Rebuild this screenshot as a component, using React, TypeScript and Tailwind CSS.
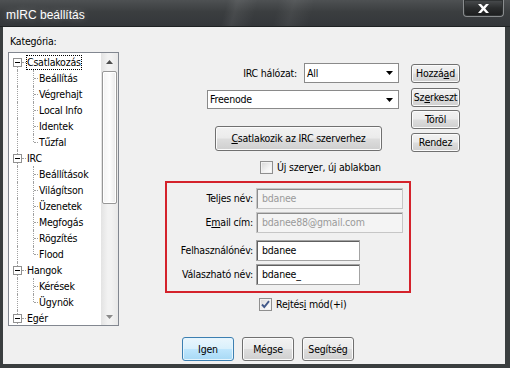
import React from "react";

const font = "font-['DejaVu_Sans_Condensed','Liberation_Sans',sans-serif]";

const btn =
  "flex items-center justify-center rounded-[3px] border border-[#707070] bg-[linear-gradient(to_bottom,#f2f2f2_0%,#ebebeb_48%,#dddddd_52%,#cfcfcf_100%)] shadow-[inset_0_0_0_1px_#fbfbfb] text-black";
const defaultBtn =
  "flex items-center justify-center rounded-[3px] border border-[#3c7fb1] bg-[linear-gradient(to_bottom,#eaf6fd_0%,#d9f0fc_48%,#bee6fd_52%,#a7d9f5_100%)] shadow-[inset_0_0_0_1px_#e6f5fd] text-black";

type Node = { label: string; children?: string[] };

const tree: Node[] = [
  { label: "Csatlakozás", children: ["Beállítás", "Végrehajt", "Local Info", "Identek", "Tűzfal"] },
  { label: "IRC", children: ["Beállítások", "Világítson", "Üzenetek", "Megfogás", "Rögzítés", "Flood"] },
  { label: "Hangok", children: ["Kérések", "Ügynök"] },
  { label: "Egér" },
];

const dot = "border-dotted border-[#a0a0a0]";

function ParentRow({ label, first, selected }: { label: string; first?: boolean; selected?: boolean }) {
  return (
    <div className="relative h-[16px] flex items-center">
      <span className={`absolute left-[8px] ${first ? "top-[8px]" : "top-0"} bottom-0 border-l ${dot}`} />
      <span className={`absolute left-[13px] top-[8px] w-[4px] border-t ${dot}`} />
      <span className="absolute left-[4px] top-[4px] w-[9px] h-[9px] border border-[#919191] bg-white flex items-center justify-center">
        <span className="w-[5px] h-px bg-black" />
      </span>
      <span
        className={`ml-[17px] h-[15px] flex items-center border border-dotted ${
          selected ? "border-black" : "border-transparent"
        }`}
      >
        {label}
      </span>
    </div>
  );
}

function ChildRow({ label, last }: { label: string; last?: boolean }) {
  return (
    <div className="relative h-[16px] flex items-center">
      <span className={`absolute left-[8px] top-0 bottom-0 border-l ${dot}`} />
      <span className={`absolute left-[24px] top-0 ${last ? "h-[8px]" : "bottom-0"} border-l ${dot}`} />
      <span className={`absolute left-[25px] top-[8px] w-[4px] border-t ${dot}`} />
      <span className="ml-[29px] h-[15px] flex items-center border border-transparent">{label}</span>
    </div>
  );
}

function Scrollbar() {
  return (
    <div className="w-[17px] flex flex-col bg-[linear-gradient(to_right,#e3e3e3,#f2f2f2_40%,#f2f2f2_60%,#e8e8e8)]">
      <div className="h-[17px] flex items-center justify-center">
        <svg width="7" height="4" viewBox="0 0 7 4">
          <path d="M3.5 0L7 4H0z" fill="#4d4d4d" />
        </svg>
      </div>
      <div className="mt-[1px] mx-[1px] h-[133px] rounded-[2px] border border-[#979797] bg-[linear-gradient(to_right,#f3f3f3,#fdfdfd_50%,#e9e9e9)] shadow-[inset_0_0_0_1px_#ffffff]" />
      <div className="flex-1" />
      <div className="h-[17px] flex items-center justify-center">
        <svg width="7" height="4" viewBox="0 0 7 4">
          <path d="M0 0H7L3.5 4z" fill="#8a8a8a" />
        </svg>
      </div>
    </div>
  );
}

function Combo({ value, className }: { value: string; className: string }) {
  return (
    <div className={`flex items-center bg-white border border-[#8a8a8a] ${className}`}>
      <span className="flex-1 pl-[2px]">{value}</span>
      <svg width="7" height="4" viewBox="0 0 7 4" className="mr-[5px]">
        <path d="M0 0H7L3.5 4z" fill="#000" />
      </svg>
    </div>
  );
}

function Check({ checked }: { checked?: boolean }) {
  return (
    <span className="w-[13px] h-[13px] border border-[#8f8f8f] bg-[linear-gradient(135deg,#d6d6d6,#f4f4f4_60%,#ffffff)] shadow-[inset_0_0_0_1px_#f2f2f2] flex items-center justify-center">
      {checked && (
        <svg width="11" height="11" viewBox="0 0 11 11">
          <path d="M2 5.5L4.3 8L9 2.2" fill="none" stroke="#42598a" strokeWidth="1.9" />
        </svg>
      )}
    </span>
  );
}

function Field({ value, disabled, width }: { value: string; disabled?: boolean; width: string }) {
  return (
    <div
      className={`h-[21px] ${width} flex items-center pl-[5px] border ${
        disabled
          ? "border-[#c6c6c6] bg-[#f4f4f4] text-[#9a9a9a] shadow-[inset_1px_1px_0_#8c8c8c]"
          : "border-[#a3a3a3] bg-white text-black shadow-[inset_1px_1px_0_#5f5f5f]"
      }`}
    >
      {value}
    </div>
  );
}

export default function App() {
  return (
    <div className={`w-[510px] h-[368px] flex flex-col bg-[#3a3e3f] ${font} text-[10.5px] leading-[13px] tracking-[-0.2px] text-black`}>
      {/* Title bar */}
      <div className="h-[27px] flex items-start border-b border-[#1f2223] bg-[linear-gradient(105deg,transparent_44%,rgba(255,255,255,0.07)_46%,transparent_50%,transparent_54%,rgba(255,255,255,0.06)_57%,transparent_61%),linear-gradient(to_bottom,#4e5153,#3b3e40_45%,#34373a)]">
        <span className="pl-[6px] pt-[8px] text-white text-[12px] leading-[14px] tracking-normal font-['Liberation_Sans',sans-serif] [text-shadow:0_0_6px_rgba(255,255,255,0.35)]">
          mIRC beállítás
        </span>
        <div className="ml-auto mr-[6px] w-[41px] h-[17px] rounded-b-[4px] border border-t-0 border-[#8a8d8f] bg-[linear-gradient(to_bottom,#4a4d4f,#2a2c2d_50%,#1c1d1e)] shadow-[inset_0_0_0_1px_#2f3233] flex items-center justify-center">
          <svg width="11" height="9" viewBox="0 0 11 9">
            <path d="M0 0H3L5.5 2.8L8 0H11L7.2 4.5L11 9H8L5.5 6.2L3 9H0L3.8 4.5z" fill="#ffffff" />
          </svg>
        </div>
      </div>

      {/* Client area */}
      <div className="ml-[3px] mr-[5px] h-[337px] bg-[#f0f0f0] flex flex-col">
        <div className="flex h-[299px]">
          {/* Category tree */}
          <div className="pl-[5px] w-[116px] flex flex-col">
            <div className="pl-[2px] pt-[8px]">Kategória:</div>
            <div className="mt-[4px] w-[111px] h-[274px] border border-[#828790] bg-white flex overflow-hidden">
              <div className="flex-1 pt-[1px] overflow-hidden">
                {tree.map((n, i) => (
                  <React.Fragment key={n.label}>
                    <ParentRow label={n.label} first={i === 0} selected={i === 0} />
                    {n.children?.map((c, j) => (
                      <ChildRow key={c} label={c} last={j === n.children!.length - 1} />
                    ))}
                  </React.Fragment>
                ))}
                <div className={`ml-[8px] h-[16px] border-l ${dot}`} />
              </div>
              <Scrollbar />
            </div>
          </div>

          {/* Server / identity */}
          <div className="ml-[46px] w-[246px] flex flex-col">
            <div className="mt-[36px] h-[20px] flex items-center justify-end gap-[7px] pr-[12px]">
              <span>IRC hálózat:</span>
              <Combo value="All" className="w-[95px] h-[20px]" />
            </div>
            <Combo value="Freenode" className="mt-[7px] ml-[42px] w-[192px] h-[19px]" />
            <button className={`${btn} mt-[17px] ml-[50px] w-[167px] h-[25px]`}>
              <span>
                <u>C</u>satlakozik az IRC szerverhez
              </span>
            </button>
            <label className="mt-[10px] ml-[95px] h-[13px] flex items-center gap-[4px]">
              <Check />
              <span>
                Új szer<u>v</u>er, új ablakban
              </span>
            </label>

            <div className="mt-[7px] h-[112px] border-2 border-[#d4222b] flex flex-col">
              {[
                { label: <>Teljes név:</>, value: "bdanee", disabled: true, w: "w-[147px]", mt: "mt-[5px]" },
                { label: <>E<u>m</u>ail cím:</>, value: "bdanee88@gmail.com", disabled: true, w: "w-[147px]", mt: "mt-[3px]" },
                { label: <>Felhasználónév:</>, value: "bdanee", disabled: false, w: "w-[104px]", mt: "mt-[7px]" },
                { label: <>Válaszható név:</>, value: "bdanee_", disabled: false, w: "w-[104px]", mt: "mt-[3px]" },
              ].map((r, i) => (
                <div key={i} className={`${r.mt} flex items-center gap-[3px]`}>
                  <span className="w-[86px] text-right">{r.label}</span>
                  <Field value={r.value} disabled={r.disabled} width={r.w} />
                </div>
              ))}
            </div>

            <label className="mt-[5px] ml-[94px] h-[13px] flex items-center gap-[4px]">
              <Check checked />
              <span>
                Rejtés<u>i</u> mód(+i)
              </span>
            </label>
          </div>

          {/* Network buttons */}
          <div className="w-[49px] flex flex-col">
            <button className={`${btn} mt-[37px] h-[19px]`}>
              <span>
                Hozzá<u>a</u>d
              </span>
            </button>
            <button className={`${btn} mt-[5px] h-[19px]`}>
              <span>
                Sz<u>e</u>rkeszt
              </span>
            </button>
            <button className={`${btn} mt-[3px] h-[19px]`}>Töröl</button>
            <button className={`${btn} mt-[4px] h-[19px]`}>Rendez</button>
          </div>
        </div>

        {/* Dialog buttons */}
        <div className="mt-[11px] pl-[179px] flex gap-[8px]">
          <button className={`${defaultBtn} w-[52px] h-[24px]`}>Igen</button>
          <button className={`${btn} w-[52px] h-[24px]`}>Mégse</button>
          <button className={`${btn} w-[52px] h-[24px]`}>Segítség</button>
        </div>
      </div>
    </div>
  );
}
